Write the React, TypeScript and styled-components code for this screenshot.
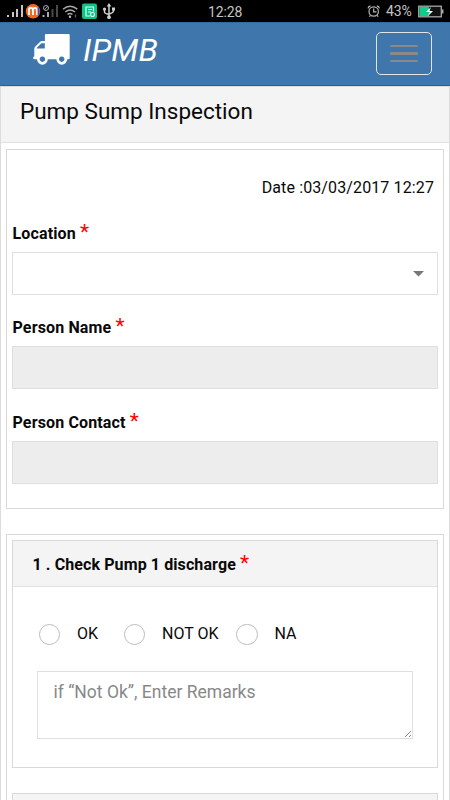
import React from 'react';
import styled, { createGlobalStyle } from 'styled-components';

const Global = createGlobalStyle`
  *, *::before, *::after { box-sizing: border-box; }
  html, body { margin: 0; height: 800px; overflow: hidden; background: #fff; }
  body { font-family: Roboto, "Liberation Sans", sans-serif; color: #090909; }
`;

const Screen = styled.div`
  width: 450px;
  height: 800px;
  overflow: hidden;
  display: flex;
  flex-direction: column;
`;

const StatusBar = styled.header`
  flex: none;
  height: 22px;
  background: #000;
  color: #c4c4c4;
  display: grid;
  grid-template-columns: 208px 1fr auto;
  font-size: 14px;
  line-height: 24px;
`;

const StatusGroup = styled.div`
  display: flex;
  height: 22px;
`;

const Clock = styled.span`
  letter-spacing: -0.1px;
`;

const Battery = styled.span`
  width: 31px;
  font-size: 14px;
  line-height: 23px;
  letter-spacing: -0.1px;
  white-space: nowrap;
`;

const Navbar = styled.nav`
  flex: none;
  height: 64px;
  background: #3f76ac;
  border-top: 1px solid #2f6ea5;
  border-bottom: 1px solid #1a65a0;
  display: flex;
  justify-content: space-between;
  padding: 9px 18px 0 33px;
`;

const Brand = styled.div`
  display: flex;
  color: #fff;
  font-size: 32px;
  line-height: 37px;
  font-style: italic;
  gap: 13px;
`;

const BrandName = styled.span`
  letter-spacing: 0.1px;
`;

const MenuButton = styled.button`
  width: 56px;
  height: 43px;
  padding: 0;
  border: 1px solid #e4e4e4;
  border-radius: 5px;
  background: transparent;
  display: flex;
  flex-direction: column;
  align-items: center;
  justify-content: center;
  gap: 5px;
`;

const MenuLine = styled.span`
  width: 28px;
  height: 2.5px;
  border-radius: 1px;
  background: #8b8886;
`;

const Page = styled.main`
  flex: 1;
  border: 1px solid #dcdcdc;
  border-bottom: 0;
`;

const PageTitle = styled.h1`
  margin: 0;
  height: 56px;
  padding-left: 19px;
  background: #f4f4f4;
  border-bottom: 1px solid #e2e2e2;
  font-size: 22.5px;
  line-height: 48px;
  font-weight: 400;
`;

const Card = styled.section<{ $height: number; $gap: number }>`
  height: ${p => p.$height}px;
  margin: ${p => p.$gap}px 5px 0;
  padding: 0 5px;
  border: 1px solid #d9d9d9;
`;

const DateLine = styled.div`
  height: 64px;
  padding: 26px 4px 0 0;
  text-align: right;
  font-size: 16px;
  line-height: 23px;
  letter-spacing: 0.12px;
`;

const Field = styled.div<{ $space?: number }>`
  padding-bottom: ${p => p.$space ?? 0}px;
`;

const Label = styled.label`
  display: block;
  height: 38px;
  padding: 9px 0 0 0.5px;
  font-size: 16px;
  line-height: 22px;
  font-weight: 700;
  letter-spacing: 0.14px;
`;

const Star = styled.span`
  color: #f00;
  font-size: 21px;
  line-height: 10px;
  font-weight: 400;
`;

const Control = styled.div<{ $disabled?: boolean }>`
  height: 43px;
  border: 1px solid #dfdfdf;
  background: ${p => (p.$disabled ? '#ededed' : '#fff')};
  display: flex;
  align-items: center;
  justify-content: flex-end;
  padding-right: 13px;
`;

const Panel = styled.article<{ $height: number }>`
  height: ${p => p.$height}px;
  margin-top: 5px;
  border: 1px solid #d9d9d9;
  & + & { margin-top: 25px; }
`;

const PanelTitle = styled.h2`
  margin: 0;
  height: 46px;
  padding-left: 19.5px;
  background: #f4f4f4;
  border-bottom: 1px solid #e2e2e2;
  font-size: 16px;
  line-height: 48px;
  font-weight: 700;
  letter-spacing: 0.1px;
`;

const Choices = styled.div`
  display: grid;
  grid-template-columns: 85px 112.5px 1fr;
  padding: 36.5px 0 0 25.5px;
  height: 84px;
`;

const Choice = styled.label`
  display: flex;
  height: 21px;
  gap: 17px;
  font-size: 16px;
  line-height: 19px;
  white-space: nowrap;
`;

const Radio = styled.span`
  width: 21.5px;
  height: 21.5px;
  border: 1px solid #bbb;
  border-radius: 50%;
`;

const Remarks = styled.div`
  height: 68px;
  margin: 0 24px;
  padding: 8px 0 0 15.5px;
  border: 1px solid #dfdfdf;
  color: #888;
  font-size: 17.5px;
  line-height: 24px;
  display: flex;
  justify-content: space-between;
`;

const Grip = styled.svg`
  align-self: flex-end;
`;

const SignalIcons = () => (
  <svg width="120" height="22" viewBox="0 0 120 22">
    <g fill="#c4c4c4">
      <rect x="7" y="15" width="2" height="2" />
      <rect x="12" y="12" width="2" height="5" />
      <rect x="16" y="9" width="2" height="8" />
      <rect x="21" y="5" width="2" height="12" />
    </g>
    <circle cx="33" cy="11.3" r="7.2" fill="#f26b21" />
    <path d="M29 15V9.3Q29 8 31 8Q33 8 33 10V15M33 10Q33 8 35 8Q37 8 37 10V15" fill="none" stroke="#fff" strokeWidth="1.8" />
    <path d="M38.5 7.5V15" stroke="#4d4ba5" strokeWidth="1.8" />
    <circle cx="46" cy="8" r="2.5" fill="none" stroke="#aaa" />
    <path d="M44.4 9.8L47.8 6.3" stroke="#aaa" />
    <path d="M43.5 15v2M48 12v5" stroke="#aaa" strokeWidth="2" />
    <path d="M52.5 9v8M57 5v12" stroke="#4a4a4a" strokeWidth="2" />
    <g fill="none" stroke="#aaa" strokeWidth="1.5">
      <path d="M63 9.2Q70 3.3 77.3 9.2" />
      <path d="M65.3 12Q70 8 75 12" />
      <path d="M67.5 14.5Q70 12.5 72.5 14.5" />
    </g>
    <circle cx="70" cy="16.8" r="1.2" fill="#bbb" />
    <path d="M75.5 14.5v3" stroke="#666" strokeWidth="1.2" />
    <rect x="82" y="3.5" width="15" height="15.5" rx="2" fill="#0cc487" />
    <path d="M93.5 11.5V7H86v9h4M88 9.5h4M88 12h3" fill="none" stroke="#d9fff1" strokeWidth="1.2" />
    <circle cx="92.5" cy="14.5" r="2" fill="none" stroke="#d9fff1" strokeWidth="1.1" />
    <g stroke="#d0d0d0" strokeWidth="1.5" fill="none">
      <path d="M109 5v12M104.5 9v3q0 1.5 4.5 2.5M113.5 8.5V11q0 1.7-4.5 3" />
    </g>
    <path d="M109 3l2.3 3.5h-4.6zM112 7.5h3v3h-3z" fill="#d0d0d0" />
    <circle cx="104.5" cy="9" r="1.6" fill="#d0d0d0" />
    <circle cx="109" cy="17.2" r="1.9" fill="#d0d0d0" />
  </svg>
);

const AlarmIcon = () => (
  <svg width="20" height="22" viewBox="366 0 20 22" fill="none" stroke="#b5b5b5" strokeWidth="1.2">
    <circle cx="373.7" cy="11.5" r="4.7" />
    <path d="M373.7 8.5v3.4h2.8M368 8.3q.3-1.8 2.5-2.4M379.4 8.3q-.3-1.8-2.5-2.4M370.5 15.5l-1.2 1.2M377 15.5l1.2 1.2" />
  </svg>
);

const BatteryIcon = () => (
  <svg width="33" height="22" viewBox="417 0 33 22">
    <rect x="418.7" y="6.2" width="22.6" height="10.6" fill="#111" stroke="#a9a9a9" strokeWidth="1.3" />
    <rect x="419.4" y="6.9" width="9.6" height="9.2" fill="#0dcb8a" />
    <rect x="442" y="9.5" width="1.5" height="4" fill="#a9a9a9" />
    <path d="M431 7l-5 5h3.5l-1.5 4 5-5h-3.5z" fill="#fff" />
  </svg>
);

const Truck = () => (
  <svg width="37" height="33" viewBox="33 32 37 33" fill="#fff">
    <path fillRule="evenodd" d="M46 34h22.5q1.2 0 1.2 1.2V58q0 1.3-1.3 1.3h-1.2a5.4 5.4 0 1 1-10.8 0h-8.6a5.4 5.4 0 1 1-10.8 0h-2.5q-1.5 0-1.5-1.5 0-1 1.3-1.2V48.5q0-1 .8-1.8l5-5q.8-.8 1.8-.8h3V35.2q0-1.2 1.1-1.2zM44.8 43.2h-2.9q-.4 0-.8.4l-4 4q-.3.3-.3.8v.1h8zM42.4 56.5a2.7 2.7 0 1 0 .01 0zM61.7 56.5a2.7 2.7 0 1 0 .01 0z" />
  </svg>
);

const options = ['OK', 'NOT OK', 'NA'];

export default function App() {
  return (
    <Screen>
      <Global />
      <StatusBar>
        <StatusGroup><SignalIcons /></StatusGroup>
        <Clock>12:28</Clock>
        <StatusGroup>
          <AlarmIcon />
          <Battery>43%</Battery>
          <BatteryIcon />
        </StatusGroup>
      </StatusBar>
      <Navbar>
        <Brand><Truck /><BrandName>IPMB</BrandName></Brand>
        <MenuButton aria-label="Menu"><MenuLine /><MenuLine /><MenuLine /></MenuButton>
      </Navbar>
      <Page>
        <PageTitle>Pump Sump Inspection</PageTitle>
        <Card $height={360} $gap={6}>
          <DateLine>Date :03/03/2017 12:27</DateLine>
          <Field $space={13}>
            <Label>Location <Star>*</Star></Label>
            <Control>
              <svg width="11" height="6"><path d="M0 0h11L5.5 5.5z" fill="#777" /></svg>
            </Control>
          </Field>
          <Field $space={14}>
            <Label>Person Name <Star>*</Star></Label>
            <Control $disabled />
          </Field>
          <Field>
            <Label>Person Contact <Star>*</Star></Label>
            <Control $disabled />
          </Field>
        </Card>
        <Card $height={400} $gap={25}>
          <Panel $height={228}>
            <PanelTitle>1 . Check Pump 1 discharge <Star>*</Star></PanelTitle>
            <Choices>
              {options.map(option => (
                <Choice key={option}><Radio />{option}</Choice>
              ))}
            </Choices>
            <Remarks>
              if “Not Ok”, Enter Remarks
              <Grip width="8" height="8" stroke="#888" strokeWidth="1"><path d="M1 7l6-6M5 7l2-2" /></Grip>
            </Remarks>
          </Panel>
          <Panel $height={228}><PanelTitle /></Panel>
        </Card>
      </Page>
    </Screen>
  );
}
